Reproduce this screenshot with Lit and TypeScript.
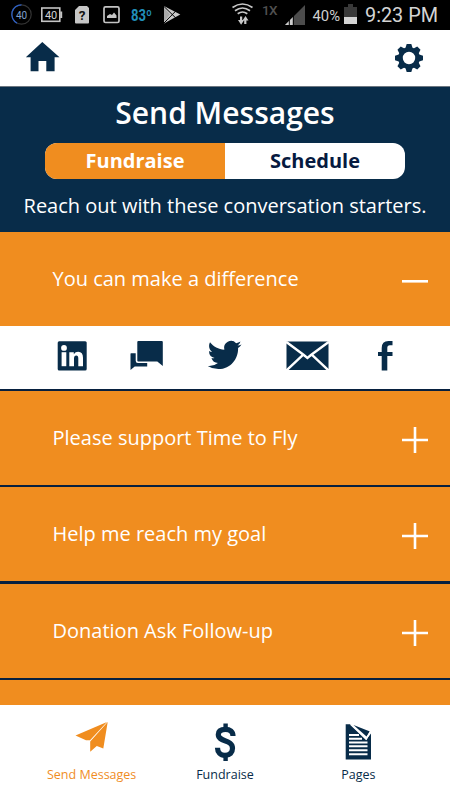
import { LitElement, html, svg, css } from "lit";
import { customElement, property } from "lit/decorators.js";

@customElement("status-bar")
class StatusBar extends LitElement {
  static styles = css`
    :host { display: block; height: 30px; background: #000; }
    svg { display: block; }
    text { font-family: Roboto, sans-serif; }
  `;
  render() {
    return html`<svg width="450" height="30" viewBox="0 0 450 30">
      <circle cx="21.5" cy="14.5" r="9.7" fill="none" stroke="#343434" stroke-width="1.2"/>
      <path d="M17 23.100A9.700 9.700 0 0 1 21.500 4.800" fill="none" stroke="#2c5fc4" stroke-width="1.300"/>
      <text x="16" y="18.500" font-size="10" textLength="11" fill="#7fa0cf">40</text>
      <rect x="41.800" y="8" width="18" height="13.300" fill="none" stroke="#c4c4c4" stroke-width="1.600"/>
      <rect x="60.200" y="11.500" width="2" height="6.500" fill="#c4c4c4"/>
      <text x="45" y="18.600" font-size="11" textLength="12.300" fill="#d0d0d0">40</text>
      <path d="M79 6h8l2 2v14.500q0 1-1 1H76q-1 0-1-1V10z" fill="#c6c6c6"/>
      <text x="82" y="20" text-anchor="middle" font-size="13.500" font-weight="700" fill="#111">?</text>
      <rect x="104" y="6.900" width="15" height="15.600" rx="1.500" fill="none" stroke="#c4c4c4" stroke-width="1.700"/>
      <path d="M107 18v-2l3-2 2 1 2-2.500 2.500 3V18z" fill="#c6c6c6"/>
      <text x="131" y="21" font-size="16" font-weight="700" textLength="21" lengthAdjust="spacingAndGlyphs" fill="#218fba">83º</text>
      <path d="M164 6L180.300 14.500 164 23.500z" fill="#c8c8c8"/>
      <path d="M164 6.500L175.800 18M164 23L175.800 11" stroke="#000" stroke-width="1"/>
      <path d="M164 7.800L170 14.600 164 21.800z" fill="#a8a8a8"/>
      <g fill="none" stroke="#c8c8c8" stroke-width="1.700">
        <path d="M232.500 7.500q10-7 20 0M235 10.700q7.500-5.400 15 0M237.700 13.700q4.800-3.400 9.600 0"/>
      </g>
      <path d="M240 16.500h2.200v3.500h2l-3.100 4.700-3.100-4.700h2zM244.200 24v-3.500h-1.700l3-4.500 3 4.500H246.400V24z" fill="#c8c8c8"/>
      <text x="262" y="14.800" font-size="13.500" font-weight="500" textLength="15.500" fill="#505050">1X</text>
      <path d="M285 25L305 5V25z" fill="#4c4c4c"/>
      <path d="M285 25l8-8V25z" fill="#cecece"/>
      <path d="M289.300 19v6M293.300 15v10" stroke="#000" stroke-width="1"/>
      <text x="312.500" y="21" font-size="15.500" textLength="27.500" lengthAdjust="spacingAndGlyphs" fill="#cfcfcf">40%</text>
      <path d="M344 7h4V4h5v3h4v10h-13z" fill="#393939"/>
      <rect x="344" y="17" width="13" height="7" fill="#d4d4d4"/>
      <text x="365" y="22.300" font-size="20.500" textLength="73" lengthAdjust="spacingAndGlyphs" fill="#d4d4d4">9:23 PM</text>
    </svg>`;
  }
}

@customElement("message-row")
class MessageRow extends LitElement {
  @property() label = "";
  @property({ type: Boolean }) open = false;
  static styles = css`
    :host { display: flex; flex: none; height: 94px; box-sizing: border-box; padding: 0 22px 0 52.500px; align-items: center; justify-content: space-between; background: #f08d1f; color: #fff; }
    .label { font: 400 20px/28px "Open Sans", sans-serif; white-space: nowrap; }
    svg { display: block; margin-top: 4px; }
  `;
  render() {
    return html`<span class="label">${this.label}</span>
      <svg width="26" height="26" viewBox="0 0 26 26">
        <path d=${this.open ? "M0 13.300H26" : "M0 13H26M13 0V26"} fill="none" stroke="#fff" stroke-width="2.600"/>
      </svg>`;
  }
}

const rows = ["Please support Time to Fly", "Help me reach my goal", "Donation Ask Follow-up"];

const plane = svg`<path d="M75.500 735.500L107 722 90 740.200 86 740.300z"/><path d="M107.700 722L103.300 748.600 96.800 746 90.200 751.800V741.500z"/>`;

const tabs = [
  { label: "Send Messages", cls: "tab active", box: "75 720 34 34", icon: plane },
  { label: "Fundraise", cls: "tab", box: "208 720 34 42",
    icon: svg`<path d="M233 736C233 731.500 230 729.300 225.500 729.300C220.500 729.300 218.300 731.500 218.300 734.600C218.300 742.400 232.500 739 232.500 748.300C232.500 752.500 230 755.300 225 755.300C220.300 755.300 217.500 752.300 217.500 747.700" fill="none" stroke="#082c49" stroke-width="5.200"/><path d="M225.600 723.500v6M225.600 754.500v6.500" fill="none" stroke="#082c49" stroke-width="4.400"/>` },
  { label: "Pages", cls: "tab", box: "341 720 34 42",
    icon: svg`<path d="M345.700 724.200h5L366 740l5-6.500V759.500h-25.300z"/><path d="M353.500 725l16.500 6.500-3.500 5z"/><path d="M350.500 724.200L366.300 739 370.300 731.500" fill="none" stroke="#fff" stroke-width="1.500"/><path d="M349 735h10M349 738.700h13M349 742.500h18.500M349 746.300h18.500M349 750.300h18.500M349 754.200h18.500" stroke="#fff" stroke-width="1.900"/>` },
];

@customElement("app-root")
class AppRoot extends LitElement {
  static styles = css`
    :host { display: flex; flex-direction: column; width: 450px; height: 800px; overflow: hidden; background: #fff; font-family: "Open Sans", sans-serif; color: #082c49; }
    svg { display: block; fill: #082c49; }
    .top { height: 56px; flex: none; box-sizing: border-box; display: flex; align-items: flex-start; justify-content: space-between; padding: 11px 26px 0 25px; }
    .gear { margin-top: 2px; }
    .hero { height: 146px; flex: none; box-sizing: border-box; border-top: 1px solid #6c7680; background: #082c49; display: flex; flex-direction: column; align-items: center; color: #fff; }
    .title { margin: 5px 0 0; font-size: 30px; line-height: 42px; font-weight: 600; white-space: nowrap; }
    .switch { display: flex; width: 360px; height: 36px; margin-top: 9px; border-radius: 12px; overflow: hidden; background: #fff; font-size: 20px; line-height: 36px; font-weight: 700; text-align: center; }
    .half { flex: 1; color: #061a40; }
    .on { background: #f08d1f; color: #fff; }
    .lead { margin: 12px 0 0; font-size: 20px; line-height: 30px; white-space: nowrap; }
    .list { flex: 1; min-height: 0; overflow: hidden; display: flex; flex-direction: column; background: #f08d1f; }
    .share { flex: none; height: 63px; background: #fff; }
    .rule { flex: none; height: 2.200px; background: #07203f; }
    .nav { flex: none; height: 95px; box-sizing: border-box; padding: 15px 25px 0; display: flex; background: #fff; }
    .tab { flex: 1; display: flex; flex-direction: column; align-items: center; font-size: 12.500px; }
    .glyph { height: 45px; }
    .tabtext { line-height: 20px; white-space: nowrap; }
    .active { color: #f08d1f; }
    .active svg { fill: #f08d1f; }
  `;
  render() {
    return html`
      <status-bar></status-bar>
      <div class="top">
        <svg width="36" height="31" viewBox="25 41 36 31"><path d="M42.300 42L59.500 57.300H54.600V71.300H46.300V61H38.500V71.300H30.600V57.300H25.800z"/></svg>
        <svg class="gear" width="30" height="30" viewBox="-15 -15 30 30">
          <circle r="8.500" fill="none" stroke="#082c49" stroke-width="4.600"/>
          ${[0, 45, 90, 135, 180, 225, 270, 315].map((a) => svg`<path transform="rotate(${a})" d="M-3.700-9.500L-2.300-14H2.300L3.700-9.500z"/>`)}
        </svg>
      </div>
      <div class="hero">
        <h1 class="title">Send Messages</h1>
        <div class="switch"><div class="half on">Fundraise</div><div class="half">Schedule</div></div>
        <p class="lead">Reach out with these conversation starters.</p>
      </div>
      <div class="list">
        <message-row label="You can make a difference" open></message-row>
        <div class="share">
          <svg width="450" height="63" viewBox="0 326 450 63">
            <rect x="57.700" y="341.300" width="29" height="29.200" rx="1.500"/>
            <g fill="#fff"><circle cx="64" cy="347.900" r="2.900"/><rect x="61.600" y="352.200" width="4.700" height="14"/>
            <path d="M69.300 352.200h4.500v2q1.500-2.400 4.400-2.400 4.800 0 4.800 6v8.400h-4.700v-7.600q0-3-2-3-2.300 0-2.300 3v7.600h-4.700z"/></g>
            <path d="M138.300 341h23.500q1 0 1 1v24l-5.500-4.500h-19q-1 0-1-1V342q0-1 1-1z"/>
            <path d="M131 353.300h4.700v7.500q0 2.200 2.200 2.200h9.300v3.500h-12.500l-4.200 3.500v-16q0-.700.500-.700z"/>
            <path transform="translate(207.700 337.800) scale(1.410 1.440)" d="M23.954 4.569a10 10 0 0 1-2.825.775 4.958 4.958 0 0 0 2.163-2.723c-.951.555-2.005.959-3.127 1.184a4.920 4.920 0 0 0-8.384 4.482C7.691 8.094 4.066 6.130 1.640 3.161a4.822 4.822 0 0 0-.666 2.475c0 1.710.870 3.213 2.188 4.096a4.904 4.904 0 0 1-2.228-.616v.061a4.923 4.923 0 0 0 3.946 4.827 4.996 4.996 0 0 1-2.212.085 4.937 4.937 0 0 0 4.604 3.417 9.868 9.868 0 0 1-6.102 2.105c-.390 0-.779-.023-1.170-.067a13.995 13.995 0 0 0 7.557 2.209c9.054 0 13.999-7.496 13.999-13.986 0-.209 0-.420-.015-.630a9.936 9.936 0 0 0 2.460-2.548z"/>
            <rect x="286.500" y="341.500" width="42" height="28.500"/>
            <path d="M286 341.700L303.500 354.800 307.400 358 311.300 354.800 329 341.700M286.500 370.300L303 354.800M328.500 370.300L312 354.800" fill="none" stroke="#fff" stroke-width="2.400"/>
            <path d="M381.700 370.500V356h-3.700v-4h3.700v-4q0-7 6.800-7h4v4.300h-2.700q-2.500 0-2.500 2.500v4.200h5.200v4h-5.200v14.500z"/>
          </svg>
        </div>
        ${rows.map((r) => html`<div class="rule"></div><message-row label=${r}></message-row>`)}
        <div class="rule"></div>
      </div>
      <div class="nav">
        ${tabs.map((t) => html`<div class=${t.cls}><div class="glyph"><svg width="34" height=${t.box.split(" ")[3]} viewBox=${t.box}>${t.icon}</svg></div><span class="tabtext">${t.label}</span></div>`)}
      </div>`;
  }
}
